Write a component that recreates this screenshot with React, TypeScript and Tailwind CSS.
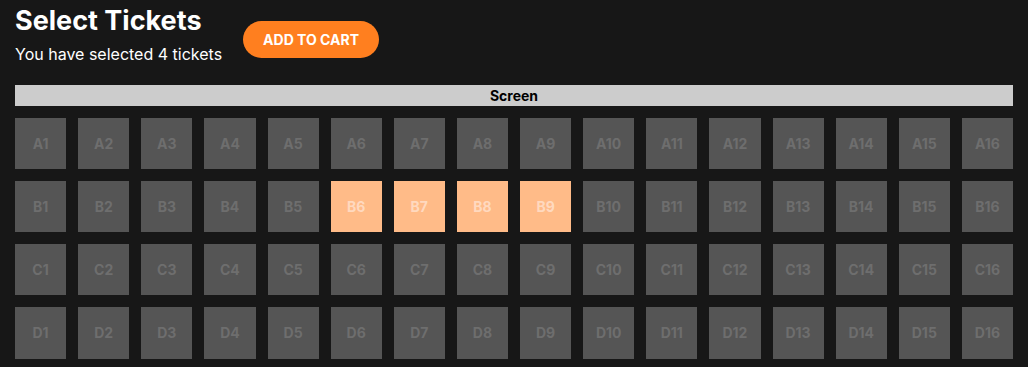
import React, { useState } from 'react';

const rows = ['A', 'B', 'C', 'D'];
const cols = Array.from({ length: 16 }, (_, i) => i + 1);

export default function App() {
  const [selected, setSelected] = useState<string[]>(['B6', 'B7', 'B8', 'B9']);

  const toggle = (id: string) => {
    setSelected((s) => (s.includes(id) ? s.filter((x) => x !== id) : [...s, id]));
  };

  return (
    <div className="min-h-screen bg-[#171717] px-[15px] pt-[4px] font-['Inter',sans-serif] text-white">
      <div className="flex items-start gap-[21px]">
        <div>
          <h1 className="text-[27px] font-bold leading-[34px]">Select Tickets</h1>
          <p className="mt-[4px] text-base leading-6">You have selected {selected.length} tickets</p>
        </div>
        <button className="mt-[17px] h-[37px] rounded-full bg-[#ff7f1f] px-5 text-sm font-bold text-white">
          ADD TO CART
        </button>
      </div>

      <div className="mt-[19px] flex h-[21px] items-center justify-center bg-[#cccccc] text-sm font-bold text-black">
        Screen
      </div>

      <div className="mt-3 grid grid-cols-16 gap-3">
        {rows.map((r) =>
          cols.map((c) => {
            const id = `${r}${c}`;
            const on = selected.includes(id);
            return (
              <button
                key={id}
                onClick={() => toggle(id)}
                className={`flex aspect-square items-center justify-center text-sm font-bold ${
                  on ? 'bg-[#ffbb88] text-[#ffd9bf]' : 'bg-[#555555] text-[#6e6e6e]'
                }`}
              >
                {id}
              </button>
            );
          })
        )}
      </div>
    </div>
  );
}
